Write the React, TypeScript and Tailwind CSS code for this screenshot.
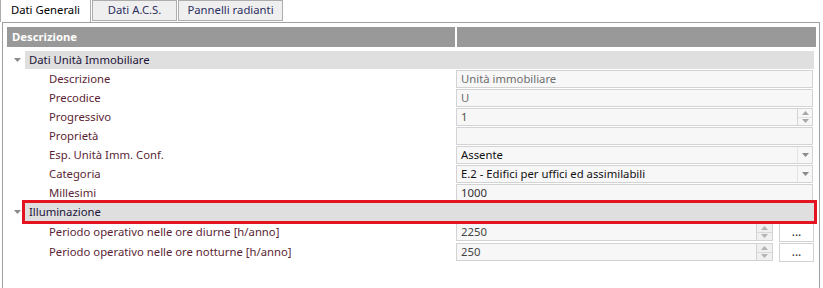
import React from "react";

const font = { fontFamily: '"Noto Sans", "Open Sans", Arial, sans-serif' };

function Arrow({ className = "" }: { className?: string }) {
  return (
    <svg width="7" height="4" viewBox="0 0 7 4" className={className}>
      <path d="M0 0 L7 0 L3.5 4 Z" fill="currentColor" />
    </svg>
  );
}
function UpArrow({ className = "" }: { className?: string }) {
  return (
    <svg width="7" height="4" viewBox="0 0 7 4" className={className}>
      <path d="M0 4 L7 4 L3.5 0 Z" fill="currentColor" />
    </svg>
  );
}

function GroupRow({ label, highlight }: { label: string; highlight?: boolean }) {
  return (
    <div className="flex h-[18px] items-center">
      <div className="w-[18px] flex justify-center text-[#8a8a8a] pl-[2px]">
        <Arrow />
      </div>
      <div className="relative flex-1 h-full bg-[#dfdfdf] flex items-center pl-[4px] pt-[1px] mr-[2px] text-[11.3px] text-[#1c1438]">
        {label}
        {highlight && (
          <div className="absolute -inset-[3px] border-[3px] border-[#e3141f] pointer-events-none" />
        )}
      </div>
    </div>
  );
}

type Kind = "text" | "spin" | "combo";

function Row({
  label,
  value,
  kind = "text",
  color = "#444",
}: {
  label: string;
  value: string;
  kind?: Kind;
  color?: string;
}) {
  return (
    <div className="flex h-[19px]">
      <div className="w-[449px] pl-[42px] pt-[1px] flex items-center text-[11.3px] text-[#5b1f35] h-[18px]">
        {label}
      </div>
      <div className="flex-1 mr-[3px] h-[18px] border border-[#d3d3d3] bg-[#f7f7f7] flex items-stretch">
        <div className="flex-1 pl-[4px] pt-[1px] flex items-center text-[11.3px]" style={{ color }}>
          {value}
        </div>
        {kind === "spin" && (
          <div className="w-[15px] border-l border-[#d3d3d3] flex flex-col">
            <div className="flex-1 flex items-center justify-center text-[#a8a8a8] border-b border-[#e2e2e2]">
              <UpArrow />
            </div>
            <div className="flex-1 flex items-center justify-center text-[#a8a8a8]">
              <Arrow />
            </div>
          </div>
        )}
        {kind === "combo" && (
          <div className="w-[15px] border-l border-[#e4e4e4] flex items-center justify-center text-[#8a8a8a]">
            <Arrow />
          </div>
        )}
      </div>
    </div>
  );
}

function PeriodRow({ label, value }: { label: string; value: string }) {
  return (
    <div className="flex h-[20px] pt-[2px]">
      <div className="w-[449px] pl-[42px] pt-[1px] flex items-center text-[11.3px] text-[#5b1f35] h-[18px]">
        {label}
      </div>
      <div className="w-[317px] h-[18px] border border-[#d3d3d3] bg-[#f7f7f7] flex items-stretch">
        <div className="flex-1 pl-[4px] pt-[1px] flex items-center text-[11.3px] text-[#444]">{value}</div>
        <div className="w-[16px] flex flex-col border-l border-[#d3d3d3]">
          <div className="flex-1 flex items-center justify-center text-[#b4b4b4] bg-[#f0f0f0] border-b border-[#d8d8d8]">
            <UpArrow />
          </div>
          <div className="flex-1 flex items-center justify-center text-[#b4b4b4] bg-[#f0f0f0]">
            <Arrow />
          </div>
        </div>
      </div>
      <div className="ml-[6px] w-[35px] h-[19px] border border-[#d3d3d3] bg-white flex items-center justify-center text-[12px] text-[#333] leading-none pb-[2px]">
        ...
      </div>
    </div>
  );
}

export default function App() {
  return (
    <div className="w-[823px] h-[288px] bg-white overflow-hidden flex flex-col" style={font}>
      <div className="flex h-[22px] shrink-0">
        <div className="w-[91px] h-[22px] border-l border-r border-[#adadad] bg-white flex items-center justify-center text-[11.3px] text-black pb-[1px]">
          Dati Generali
        </div>
        <div className="ml-[1px] w-[85px] h-[21px] border border-[#adadad] bg-[#efefef] flex items-center justify-center text-[11.3px] text-[#2e3060]">
          Dati A.C.S.
        </div>
        <div className="ml-[1px] w-[105px] h-[21px] border border-[#adadad] bg-[#efefef] flex items-center justify-center text-[11.3px] text-[#2e3060]">
          Pannelli radianti
        </div>
      </div>
      <div className="ml-[2px] w-[818px] flex-1 border-l border-r border-t border-[#a0a0a0] pt-[4px] pl-[4px] pr-[3px]">
        <div className="flex h-[20px]">
          <div className="w-[448px] bg-[#999999] flex items-center pl-[5px] pt-[1px] text-[11.3px] font-bold text-white">
            Descrizione
          </div>
          <div className="ml-[2px] flex-1 bg-[#999999]" />
        </div>
        <div className="mt-[4px]">
          <GroupRow label="Dati Unità Immobiliare" />
          <div className="mt-[1px]">
            <Row label="Descrizione" value="Unità immobiliare" color="#6e6e6e" />
            <Row label="Precodice" value="U" color="#6e6e6e" />
            <Row label="Progressivo" value="1" kind="spin" color="#555" />
            <Row label="Proprietà" value="" />
            <Row label="Esp. Unità Imm. Conf." value="Assente" kind="combo" color="#111" />
            <Row label="Categoria" value="E.2 - Edifici per uffici ed assimilabili" kind="combo" color="#111" />
            <Row label="Millesimi" value="1000" color="#333" />
          </div>
          <GroupRow label="Illuminazione" highlight />
          <PeriodRow label="Periodo operativo nelle ore diurne [h/anno]" value="2250" />
          <PeriodRow label="Periodo operativo nelle ore notturne [h/anno]" value="250" />
        </div>
      </div>
    </div>
  );
}
